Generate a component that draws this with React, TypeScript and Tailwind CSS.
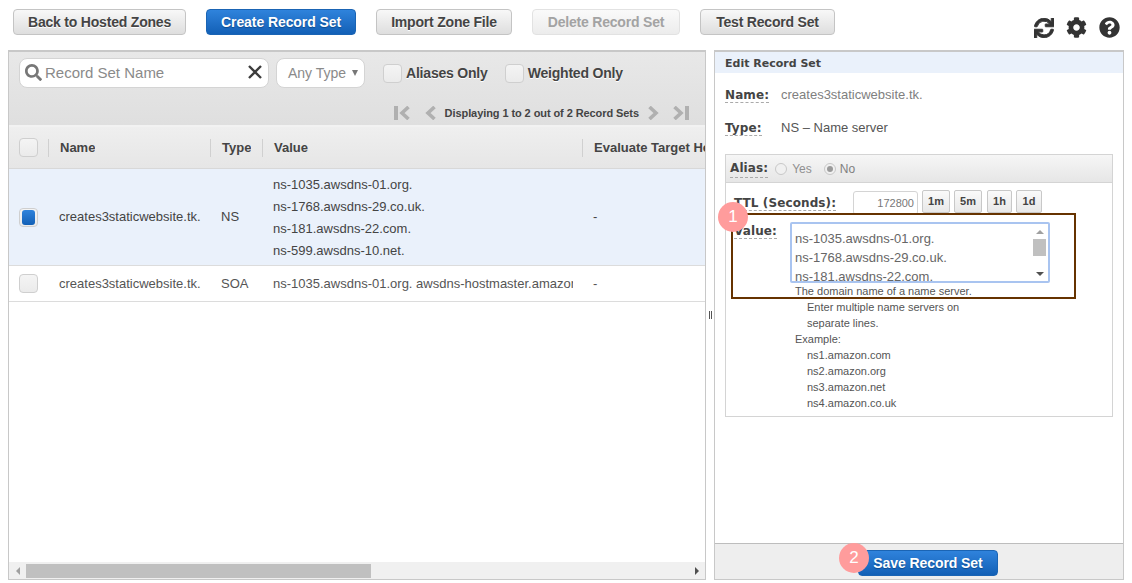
import React from "react";
import { FaSync, FaCog, FaQuestionCircle, FaSearch } from "react-icons/fa";

const arial = "[font-family:'Liberation_Sans',Arial,sans-serif]";
const deja = "[font-family:'DejaVu_Sans',Verdana,sans-serif]";

function Btn({ w, children, kind = "default" }: { w: string; children: React.ReactNode; kind?: "default" | "primary" | "disabled" }) {
  const cls =
    kind === "primary"
      ? "text-white tracking-[-0.08px] bg-gradient-to-b from-[#2f83dc] to-[#1260b6] border-[#1a64b4] [text-shadow:0_1px_1px_#0c4a8c]"
      : kind === "disabled"
      ? "text-[#a3a3a3] tracking-[-0.2px] bg-gradient-to-b from-[#fafafa] to-[#ececec] border-[#e2e2e2]"
      : "text-[#444444] tracking-[-0.2px] bg-gradient-to-b from-[#f8f8f8] to-[#dedede] border-[#c4c4c4] [text-shadow:0_1px_0_#ffffff]";
  return (
    <div className={`${w} h-[26px] flex items-center justify-center rounded-[4px] border text-[14px] font-bold ${cls}`}>
      {children}
    </div>
  );
}

function Check({ checked = false }: { checked?: boolean }) {
  return (
    <div className="w-[19px] h-[19px] rounded-[4px] border border-[#cfcfcf] bg-gradient-to-b from-[#f4f4f4] to-[#ebebeb] flex items-center justify-center">
      {checked && <div className="w-[13px] h-[15px] rounded-[3px] bg-gradient-to-b from-[#2f83dc] to-[#1260b6]" />}
    </div>
  );
}

function Chev({ dir, bar = false }: { dir: "l" | "r"; bar?: boolean }) {
  const w = bar ? 16 : 11;
  return (
    <svg width={w} height="14" viewBox={`0 0 ${w} 14`} className="shrink-0">
      {dir === "l" ? (
        <>
          {bar && <rect x="0" y="0" width="4" height="14" fill="#b0b0b0" />}
          <path d={`M${w - 1.5} 1 L${w - 8} 7 L${w - 1.5} 13`} stroke="#b0b0b0" strokeWidth="3.6" fill="none" />
        </>
      ) : (
        <>
          {bar && <rect x={w - 4} y="0" width="4" height="14" fill="#b0b0b0" />}
          <path d="M1.5 1 L8 7 L1.5 13" stroke="#b0b0b0" strokeWidth="3.6" fill="none" />
        </>
      )}
    </svg>
  );
}

function Sep() {
  return <div className="w-px h-[18px] bg-[#d0d0d0] shrink-0" />;
}

function HeadCell({ w, children }: { w: string; children: React.ReactNode }) {
  return (
    <div className={`${w} shrink-0 flex items-center h-full`}>
      <Sep />
      <div className="pl-[11px] whitespace-nowrap overflow-hidden">{children}</div>
    </div>
  );
}

function Dur({ w, cls = "", children }: { w: string; cls?: string; children: React.ReactNode }) {
  return (
    <div className={`${w} ${cls} h-[23px] flex items-center justify-center rounded-[2px] border border-[#c8c8c8] bg-gradient-to-b from-[#fafafa] to-[#e8e8e8] text-[11px] font-bold text-[#444444]`}>
      {children}
    </div>
  );
}

function Radio({ on = false }: { on?: boolean }) {
  return (
    <div className="w-[12px] h-[12px] rounded-full border border-[#c8c8c8] bg-[#f0f0f0] flex items-center justify-center">
      {on && <div className="w-[6px] h-[6px] rounded-full bg-[#9a9a9a]" />}
    </div>
  );
}

function Dot({ n, cls }: { n: string; cls: string }) {
  return (
    <div className={`absolute w-[30px] h-[30px] rounded-full bg-[#ff9c9c] text-white text-[17px] flex items-center justify-center ${cls}`}>
      {n}
    </div>
  );
}

const labelCls = "text-[12px] tracking-[0.1px] font-bold text-[#444444]";

export default function App() {
  return (
    <div className={`relative w-[1132px] h-[583px] overflow-hidden bg-white ${arial}`}>
      {/* toolbar */}
      <div className="h-[50px] flex items-start pt-[9px] pl-[13px] pr-[12px] gap-[20px]">
        <Btn w="w-[173px]">Back to Hosted Zones</Btn>
        <Btn w="w-[150px]" kind="primary">Create Record Set</Btn>
        <Btn w="w-[136px]">Import Zone File</Btn>
        <Btn w="w-[148px]" kind="disabled">Delete Record Set</Btn>
        <Btn w="w-[135px]">Test Record Set</Btn>
        <div className="ml-auto flex items-center gap-[12px] pt-[8px] text-[#333333]">
          <FaSync size={20} stroke="currentColor" strokeWidth={24} />
          <FaCog size={21} />
          <FaQuestionCircle size={21} />
        </div>
      </div>

      {/* main */}
      <div className="flex pl-[8px] h-[530px]">
        {/* left panel */}
        <div className="w-[698px] h-full border border-t-2 border-[#c8c8c8] flex flex-col shrink-0">
          <div className="h-[75px] shrink-0 border-b-2 border-[#f2f2f2] bg-gradient-to-b from-[#e8e8e8] to-[#dfdfdf] pl-[10px] pr-[16px] pt-[6px]">
            <div className="flex items-center h-[30px]">
              <div className="w-[250px] h-[30px] rounded-[8px] border border-[#d4d4d4] bg-white flex items-center pl-[5px] pr-[5px] shrink-0">
                <FaSearch size={17} className="text-[#777777] mb-[2px]" />
                <span className="ml-[3px] pt-[1px] text-[15px] text-[#8a8a8a] whitespace-nowrap">Record Set Name</span>
                <svg width="16" height="16" viewBox="0 0 16 16" className="ml-auto mb-[3px]">
                  <path d="M2 2 L14 14 M14 2 L2 14" stroke="#3c3c3c" strokeWidth="2.4" />
                </svg>
              </div>
              <div className="ml-[7px] w-[89px] h-[30px] rounded-[8px] border border-[#d4d4d4] bg-white flex items-center pl-[11px] shrink-0">
                <span className="text-[14px] text-[#8a8a8a] whitespace-nowrap">Any Type</span>
                <span className="ml-[6px] w-0 h-0 border-l-[3px] border-r-[3px] border-t-[6px] border-l-transparent border-r-transparent border-t-[#777777]" />
              </div>
              <div className="ml-[18px]"><Check /></div>
              <span className="ml-[4px] text-[14px] font-bold tracking-[-0.2px] text-[#444444] whitespace-nowrap [text-shadow:0_1px_0_#ffffff]">Aliases Only</span>
              <div className="ml-[17px]"><Check /></div>
              <span className="ml-[4px] text-[14px] font-bold tracking-[-0.2px] text-[#444444] whitespace-nowrap [text-shadow:0_1px_0_#ffffff]">Weighted Only</span>
            </div>
            <div className="flex items-center justify-end mt-[18px] h-[14px]">
              <Chev dir="l" bar />
              <div className="w-[15px]" />
              <Chev dir="l" />
              <span className="mx-[9px] text-[11px] font-bold tracking-[-0.08px] text-[#444444] whitespace-nowrap">Displaying 1 to 2 out of 2 Record Sets</span>
              <Chev dir="r" />
              <div className="w-[14px]" />
              <Chev dir="r" bar />
            </div>
          </div>

          <div className="h-[42px] shrink-0 flex items-center border-b border-[#d8d8d8] bg-gradient-to-b from-[#efefef] to-[#e6e6e6] text-[13px] font-bold text-[#444444] overflow-hidden">
            <div className="w-[39px] shrink-0 pl-[10px]"><Check /></div>
            <HeadCell w="w-[162px]">Name</HeadCell>
            <HeadCell w="w-[52px]">Type</HeadCell>
            <HeadCell w="w-[320px]">Value</HeadCell>
            <HeadCell w="w-[123px]">Evaluate Target Health</HeadCell>
          </div>

          <div className="h-[97px] shrink-0 flex items-center bg-[#eaf1fb] border-b border-[#dcdcdc] text-[13px] text-[#444444]">
            <div className="w-[39px] shrink-0 pl-[10px]"><Check checked /></div>
            <div className="w-[163px] shrink-0 pl-[11px]">creates3staticwebsite.tk.</div>
            <div className="w-[52px] shrink-0 pl-[10px]">NS</div>
            <div className="w-[320px] shrink-0 pl-[10px] mt-[2px] leading-[22px]">
              <div>ns-1035.awsdns-01.org.</div>
              <div>ns-1768.awsdns-29.co.uk.</div>
              <div>ns-181.awsdns-22.com.</div>
              <div>ns-599.awsdns-10.net.</div>
            </div>
            <div className="pl-[10px]">-</div>
          </div>

          <div className="h-[36px] shrink-0 flex items-center border-b border-[#dcdcdc] text-[13px] text-[#555555]">
            <div className="w-[39px] shrink-0 pl-[10px]"><Check /></div>
            <div className="w-[163px] shrink-0 pl-[11px]">creates3staticwebsite.tk.</div>
            <div className="w-[52px] shrink-0 pl-[10px]">SOA</div>
            <div className="w-[320px] shrink-0 pl-[10px]">
              <div className="w-[300px] whitespace-nowrap overflow-hidden">ns-1035.awsdns-01.org. awsdns-hostmaster.amazon.com. 1 7200 900 1209600 86400</div>
            </div>
            <div className="pl-[10px]">-</div>
          </div>

          <div className="flex-1" />

          <div className="h-[17px] shrink-0 bg-[#f0f0f0] flex items-center">
            <div className="w-[17px] flex justify-center">
              <span className="ml-[1px] w-0 h-0 border-y-[4px] border-r-[4px] border-y-transparent border-r-[#a0a0a0]" />
            </div>
            <div className="w-[345px] h-[14px] bg-[#c0c0c0]" />
            <div className="ml-auto w-[17px] flex justify-center">
              <span className="w-0 h-0 border-y-[4px] border-l-[4px] border-y-transparent border-l-[#505050]" />
            </div>
          </div>
        </div>

        {/* splitter */}
        <div className="w-[8px] shrink-0 flex items-center justify-center">
          <div className="flex gap-px h-[8px]">
            <div className="w-px bg-[#555555]" />
            <div className="w-px bg-[#555555]" />
          </div>
        </div>

        {/* right panel */}
        <div className="w-[410px] h-full border border-t-2 border-[#c8c8c8] flex flex-col shrink-0">
          <div className={`h-[21px] shrink-0 bg-[#eaf1fb] pl-[10px] pt-[4px] flex items-center text-[11px] font-bold text-[#444444] ${deja}`}>Edit Record Set</div>

          <div className="flex-1 min-h-0 pl-[10px] pr-[10px]">
            <div className="flex items-center mt-[14px] h-[16px]">
              <span className={`w-[56px] shrink-0 ${labelCls} ${deja}`}>
                <span className="border-b border-dashed border-[#aaaaaa]">Name:</span>
              </span>
              <span className="text-[13px] text-[#808080]">creates3staticwebsite.tk.</span>
            </div>
            <div className="flex items-center mt-[17px] h-[16px]">
              <span className={`w-[56px] shrink-0 ${labelCls} ${deja}`}>
                <span className="border-b border-dashed border-[#aaaaaa]">Type:</span>
              </span>
              <span className="text-[13px] text-[#555555]">NS – Name server</span>
            </div>

            <div className="mt-[18px] border border-[#d4d4d4]">
              <div className="h-[28px] flex items-center pl-[4px] bg-gradient-to-b from-[#f6f6f6] to-[#e6e6e6] border-b border-[#d4d4d4]">
                <span className={`${labelCls} border-b border-dashed border-[#aaaaaa] ${deja}`}>Alias:</span>
                <span className="ml-[7px]"><Radio /></span>
                <span className="ml-[5px] text-[12px] text-[#909090]">Yes</span>
                <span className="ml-[12px]"><Radio on /></span>
                <span className="ml-[4px] text-[12px] text-[#808080]">No</span>
              </div>
              <div className="pl-[8px] pt-[7px] pb-[5px]">
                <div className="flex items-start h-[32px]">
                  <span className={`w-[119px] shrink-0 pt-[4px] ${labelCls} whitespace-nowrap ${deja}`}>
                    <span className="border-b border-dashed border-[#aaaaaa]">TTL (Seconds):</span>
                  </span>
                  <div className="w-[65px] h-[24px] mt-[1px] shrink-0 rounded-[3px] border border-[#d4d4d4] pr-[3px] flex items-center justify-end text-[11px] text-[#777777]">172800</div>
                  <div className="ml-[4px] flex">
                    <Dur w="w-[28px]">1m</Dur>
                    <Dur w="w-[28px]" cls="ml-[4px]">5m</Dur>
                    <Dur w="w-[25px]" cls="ml-[5px]">1h</Dur>
                    <Dur w="w-[26px]" cls="ml-[4px]">1d</Dur>
                  </div>
                </div>
                <div className="flex items-start">
                  <span className={`w-[56px] shrink-0 ${labelCls} ${deja}`}>
                    <span className="border-b border-dashed border-[#aaaaaa]">Value:</span>
                  </span>
                  <div className="w-[260px] h-[61px] rounded-[2px] border-2 border-[#a9c4f0] flex overflow-hidden">
                    <div className="flex-1 pl-[3px] pt-[5px] text-[13px] leading-[19px] text-[#666666] whitespace-nowrap overflow-hidden">
                      <div>ns-1035.awsdns-01.org.</div>
                      <div>ns-1768.awsdns-29.co.uk.</div>
                      <div>ns-181.awsdns-22.com.</div>
                    </div>
                    <div className="w-[17px] shrink-0 flex flex-col items-center bg-white">
                      <span className="mt-[6px] w-0 h-0 border-x-[4px] border-b-[4px] border-x-transparent border-b-[#a0a0a0]" />
                      <div className="mt-[5px] w-[13px] h-[17px] bg-[#c0c0c0]" />
                      <span className="mt-auto mb-[5px] w-0 h-0 border-x-[4px] border-t-[4px] border-x-transparent border-t-[#505050]" />
                    </div>
                  </div>
                </div>
                <div className="pl-[61px] text-[11px] leading-[16px] text-[#555555]">
                  <div>The domain name of a name server.</div>
                  <div className="pl-[12px]">Enter multiple name servers on</div>
                  <div className="pl-[12px]">separate lines.</div>
                  <div>Example:</div>
                  <div className="pl-[12px]">ns1.amazon.com</div>
                  <div className="pl-[12px]">ns2.amazon.org</div>
                  <div className="pl-[12px]">ns3.amazon.net</div>
                  <div className="pl-[12px]">ns4.amazon.co.uk</div>
                </div>
              </div>
            </div>
          </div>

          <div className="h-[36px] shrink-0 border-t border-[#bdbdbd] bg-[#eeeeee] flex items-start pt-[6px] pl-[143px]">
            <Btn w="w-[140px]" kind="primary">Save Record Set</Btn>
          </div>
        </div>
      </div>

      {/* annotations */}
      <div className="absolute left-[731px] top-[213px] w-[345px] h-[86px] border-2 border-[#663300]" />
      <Dot n="1" cls="left-[718px] top-[202px]" />
      <Dot n="2" cls="left-[839px] top-[543px]" />
    </div>
  );
}
